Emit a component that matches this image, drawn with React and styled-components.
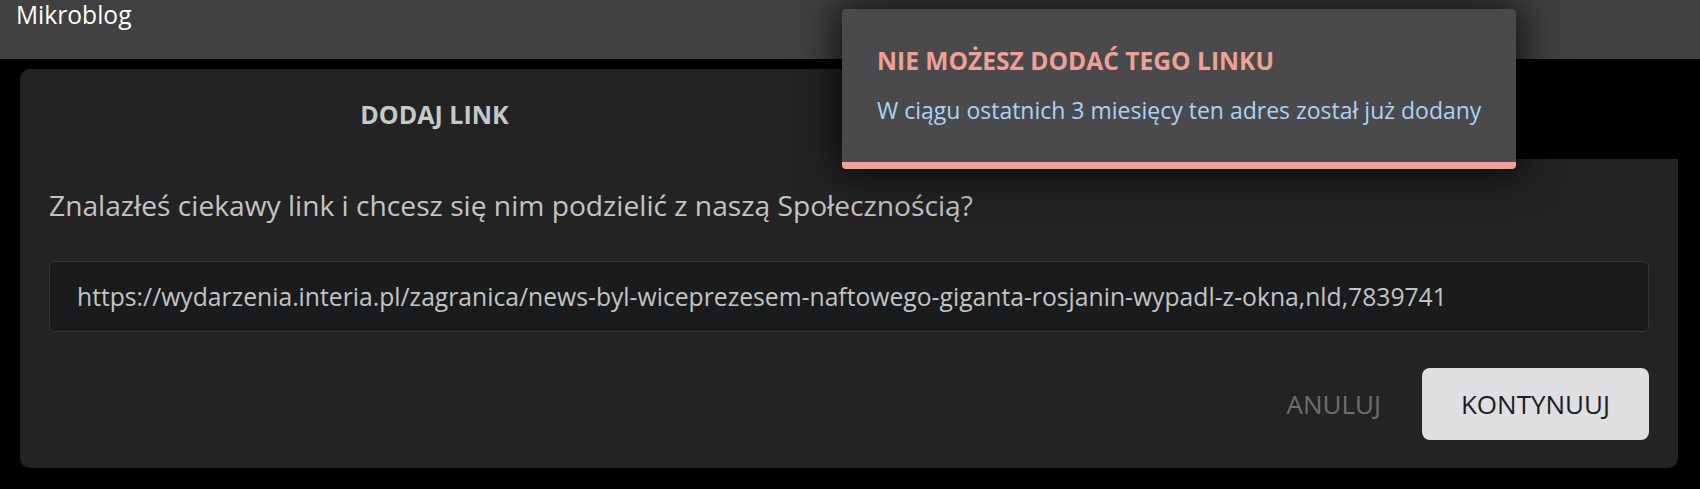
import React from 'react';
import styled, { createGlobalStyle } from 'styled-components';

const Global = createGlobalStyle`
    body {
        margin: 0;
        background: #000;
        font-family: "Open Sans", "Noto Sans", sans-serif;
    }
`

const Page = styled.div`
    position: relative;
    min-height: 489px;
`

const Header = styled.header`
    height: 59px;
    background: #404040;
    padding-left: 16px;
    color: #fff;
    font-size: 24.6px;
    line-height: 30px;
`

const Card = styled.section`
    margin: 10px 22px 0 20px;
`

const Tabs = styled.div`
    display: flex;
    height: 90px;
`

const Tab = styled.div`
    flex: 1;
    display: flex;
    align-items: center;
    justify-content: center;
    background: ${p => (p.active ? '#232323' : 'transparent')};
    border-radius: 10px 10px 0 0;
    color: #c8c8c8;
    font-size: 25px;
    font-weight: 700;
`

const Body = styled.div`
    background: #232323;
    border-radius: 0 0 10px 10px;
    padding: 27px 29px 28px;
`

const Question = styled.p`
    margin: 0 0 37px;
    color: #c4c4c4;
    font-size: 28.2px;
`

const Input = styled.div`
    height: 69px;
    display: flex;
    align-items: center;
    padding: 0 27px;
    background: #1a1b1d;
    border: 1px solid #313236;
    border-radius: 5px;
    color: #c4c4c4;
    font-size: 24.7px;
    white-space: nowrap;
    overflow: hidden;
`

const Actions = styled.div`
    display: flex;
    justify-content: flex-end;
    align-items: center;
    margin-top: 36px;
`

const Button = styled.button`
    height: 72px;
    border: none;
    border-radius: 8px;
    padding: ${p => (p.primary ? '0 39px' : '0 20px')};
    margin-left: ${p => (p.primary ? '21px' : '0')};
    background: ${p => (p.primary ? '#dfdfe1' : 'transparent')};
    color: ${p => (p.primary ? '#1a1d24' : '#6e6e6e')};
    font-family: inherit;
    font-size: 26px;
    font-weight: ${p => (p.primary ? 500 : 400)};
    cursor: pointer;
`

const Toast = styled.div`
    position: absolute;
    left: 842px;
    top: 9px;
    width: 674px;
    height: 160px;
    box-sizing: border-box;
    padding: 35px 35px 0;
    background: #4a4a4c;
    border-bottom: 7px solid #eda199;
    border-radius: 4px;
    box-shadow: 0 0 40px 6px rgba(0, 0, 0, 0.75);
`

const ToastTitle = styled.div`
    color: #efa097;
    font-size: 24.6px;
    font-weight: 700;
`

const ToastText = styled.div`
    margin-top: 17px;
    color: #add2f5;
    font-size: 23px;
    white-space: nowrap;
`

function App() {
    return (
        <Page>
            <Global />
            <Header>Mikroblog</Header>
            <Card>
                <Tabs>
                    <Tab active>DODAJ LINK</Tab>
                    <Tab />
                </Tabs>
                <Body>
                    <Question>Znalazłeś ciekawy link i chcesz się nim podzielić z naszą Społecznością?</Question>
                    <Input>https://wydarzenia.interia.pl/zagranica/news-byl-wiceprezesem-naftowego-giganta-rosjanin-wypadl-z-okna,nld,7839741</Input>
                    <Actions>
                        <Button>ANULUJ</Button>
                        <Button primary>KONTYNUUJ</Button>
                    </Actions>
                </Body>
            </Card>
            <Toast>
                <ToastTitle>NIE MOŻESZ DODAĆ TEGO LINKU</ToastTitle>
                <ToastText>W ciągu ostatnich 3 miesięcy ten adres został już dodany</ToastText>
            </Toast>
        </Page>
    )
}

export default App;
